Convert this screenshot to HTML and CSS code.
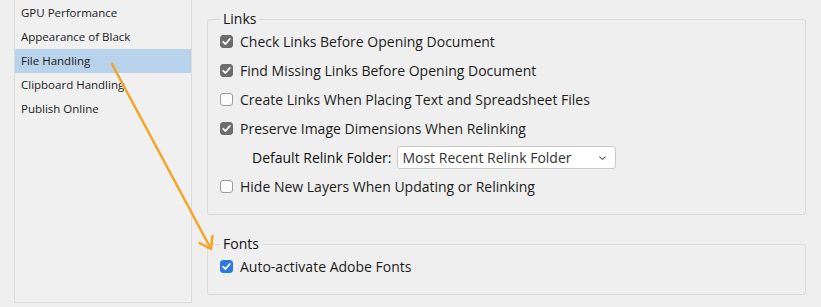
FILE: index.html
```html
<!DOCTYPE html>
<html>
<head>
<meta charset="utf-8">
<link rel="stylesheet" href="styles.css">
</head>
<body>
<div class="page">
  <nav class="sidebar">
    <div class="item">GPU Performance</div>
    <div class="item">Appearance of Black</div>
    <div class="item selected">File Handling</div>
    <div class="item">Clipboard Handling</div>
    <div class="item">Publish Online</div>
  </nav>
  <main class="content">
    <fieldset class="group links">
      <legend>Links</legend>
      <label class="row"><span class="cb checked"><svg viewBox="0 0 13 13"><path d="M3.2 6.8 L5.5 9 L9.8 4" /></svg></span>Check Links Before Opening Document</label>
      <label class="row"><span class="cb checked"><svg viewBox="0 0 13 13"><path d="M3.2 6.8 L5.5 9 L9.8 4" /></svg></span>Find Missing Links Before Opening Document</label>
      <label class="row"><span class="cb"></span>Create Links When Placing Text and Spreadsheet Files</label>
      <label class="row"><span class="cb checked"><svg viewBox="0 0 13 13"><path d="M3.2 6.8 L5.5 9 L9.8 4" /></svg></span>Preserve Image Dimensions When Relinking</label>
      <div class="row sub">
        <span class="sublabel">Default Relink Folder:</span>
        <div class="select">
          <span>Most Recent Relink Folder</span>
          <svg class="chev" viewBox="0 0 10 6"><path d="M1.5 1.5 L5 4.5 L8.5 1.5" /></svg>
        </div>
      </div>
      <label class="row"><span class="cb"></span>Hide New Layers When Updating or Relinking</label>
    </fieldset>
    <fieldset class="group fonts">
      <legend>Fonts</legend>
      <label class="row"><span class="cb blue"><svg viewBox="0 0 13 13"><path d="M3.2 6.8 L5.5 9 L9.8 4" /></svg></span>Auto-activate Adobe Fonts</label>
    </fieldset>
  </main>
  <svg class="arrow" viewBox="0 0 821 307" width="821" height="307">
    <path d="M112 64 L211 249 M199.5 243 L211 249 L212.5 236" />
  </svg>
</div>
</body>
</html>
```

FILE: styles.css
```css
html, body {
  margin: 0;
  padding: 0;
  background: #efefef;
}
body {
  font-family: "Open Sans", "DejaVu Sans", sans-serif;
  color: #1c1c1c;
  width: 821px;
  height: 307px;
  overflow: hidden;
}
.page {
  position: relative;
  display: flex;
  align-items: flex-start;
  height: 307px;
}
.sidebar {
  margin-left: 14px;
  width: 178px;
  padding-top: 1px;
  box-sizing: border-box;
  height: 303px;
  border: 1px solid #dcdcdc;
  border-top: none;
  background: #f0f0f0;
  flex: none;
}
.item {
  height: 24px;
  line-height: 24px;
  padding-left: 6px;
  font-size: 11.5px;
  color: #1a1a1a;
}
.item.selected {
  background: #b9d3ec;
}
.content {
  margin-left: 15px;
  width: 599px;
  display: flex;
  flex-direction: column;
}
.group {
  margin: 0;
  border: 1px solid #dadada;
  border-radius: 3px;
  padding: 0 0 0 12px;
  min-width: 0;
  box-sizing: border-box;
}
.group legend {
  padding: 0 3px;
  font-size: 14px;
  line-height: 16px;
  color: #111;
}
.links {
  margin-top: 11px;
  height: 204px;
}
.fonts {
  margin-top: 21px;
  padding-top: 4px;
  height: 59px;
}
.row {
  display: flex;
  align-items: center;
  height: 29px;
  font-size: 14px;
  color: #1c1c1c;
}
.fonts .row {
  height: 20px;
}
.cb {
  width: 13px;
  height: 13px;
  box-sizing: border-box;
  border-radius: 3px;
  border: 1px solid #9c9c9c;
  background: #fbfbfb;
  margin-right: 7px;
  flex: none;
  display: flex;
}
.cb svg {
  width: 13px;
  height: 13px;
  margin: -1px;
}
.cb path {
  fill: none;
  stroke: #fff;
  stroke-width: 1.8;
  stroke-linecap: round;
  stroke-linejoin: round;
}
.cb.checked {
  background: #6d6d6d;
  border-color: #6d6d6d;
}
.cb.blue {
  background: #2b7ae2;
  border-color: #2b7ae2;
}
.sub {
  padding-left: 32px;
}
.sublabel {
  font-weight: 500;
  color: #111;
  margin-right: 6px;
}
.select {
  width: 219px;
  height: 23px;
  box-sizing: border-box;
  border: 1px solid #c9c9c9;
  border-radius: 3px;
  background: #fff;
  display: flex;
  align-items: center;
  justify-content: space-between;
  padding: 0 8px 0 4px;
  color: #333;
}
.chev {
  width: 9px;
  height: 6px;
}
.chev path {
  fill: none;
  stroke: #555;
  stroke-width: 1.2;
}
.arrow {
  position: absolute;
  left: 0;
  top: 0;
  pointer-events: none;
}
.arrow path {
  fill: none;
  stroke: #f5a524;
  stroke-width: 2.5;
  stroke-linecap: round;
  stroke-linejoin: round;
}
```
